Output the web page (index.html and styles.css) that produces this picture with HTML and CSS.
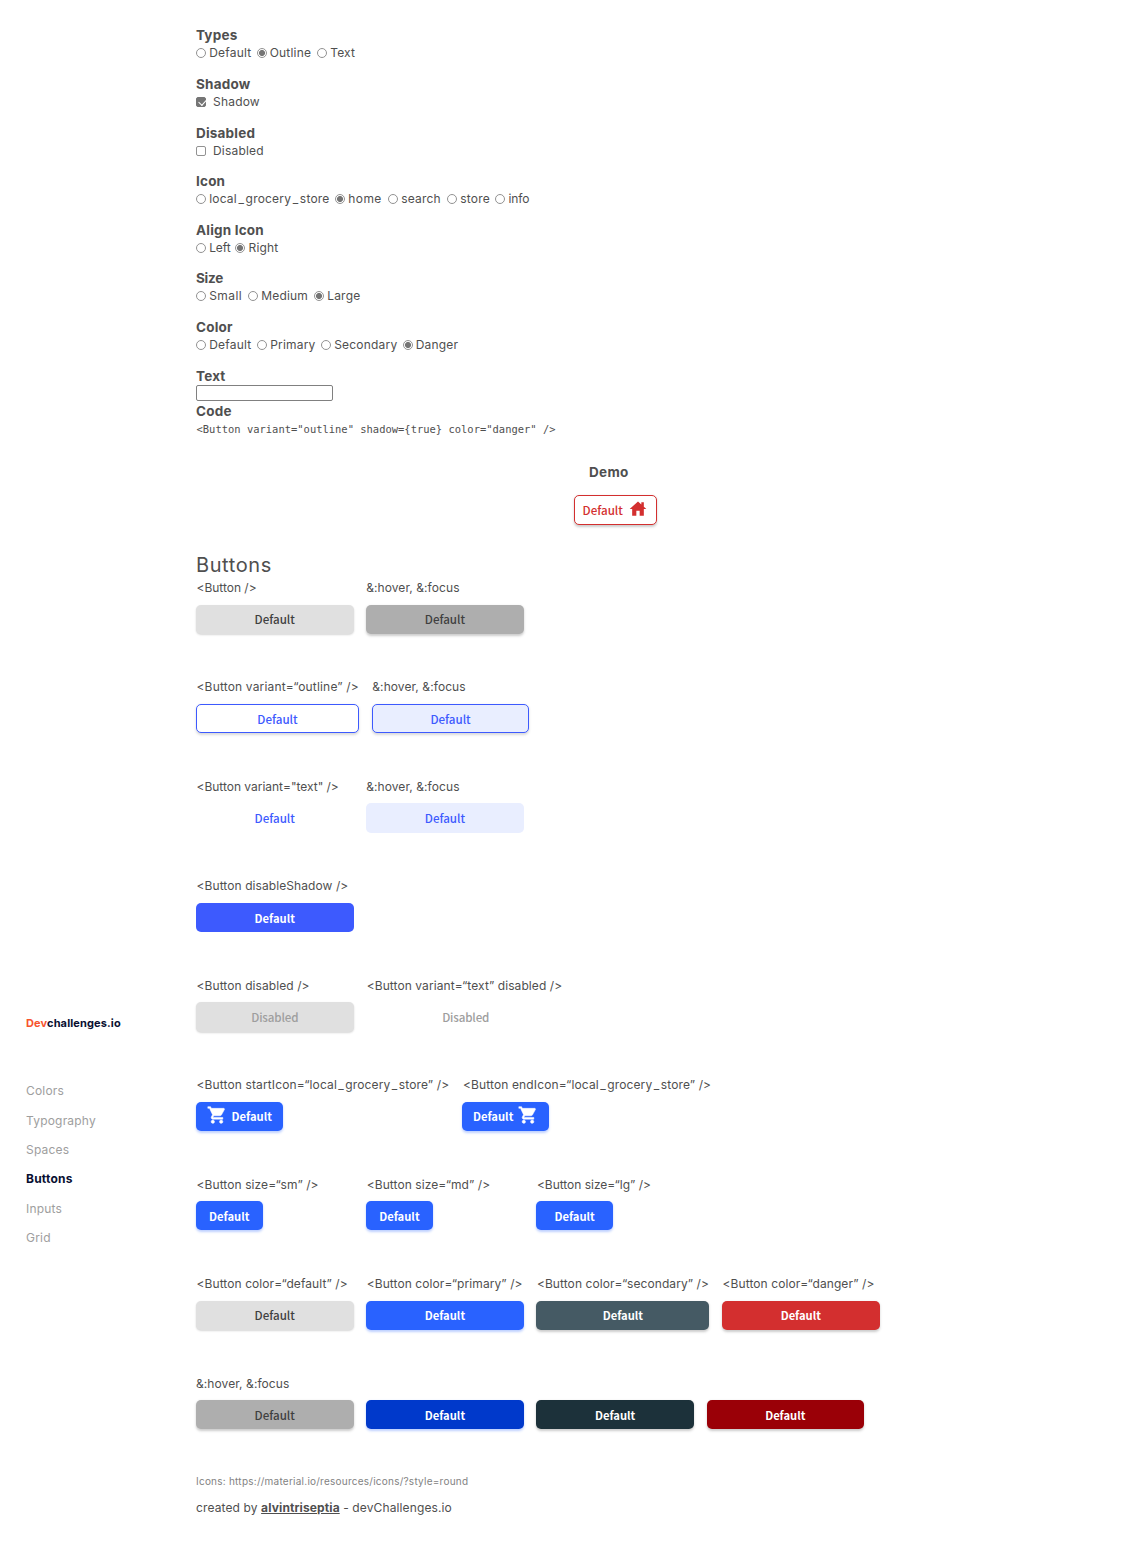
FILE: index.html
```html
<!DOCTYPE html>
<html lang="en">
<head>
<meta charset="utf-8">
<title>Button Component</title>
<link rel="stylesheet" href="styles.css">
</head>
<body>
<svg class="sprite" aria-hidden="true">
  <symbol id="cart" viewBox="0 0 24 24"><path d="M7 18c-1.1 0-1.99.9-1.99 2S5.9 22 7 22s2-.9 2-2-.9-2-2-2zM1 2v2h2l3.6 7.59-1.35 2.45c-.16.28-.25.61-.25.96 0 1.1.9 2 2 2h12v-2H7.42c-.14 0-.25-.11-.25-.25l.03-.12.9-1.63h7.45c.75 0 1.41-.41 1.75-1.03l3.58-6.49c.08-.14.12-.31.12-.48 0-.55-.45-1-1-1H5.21l-.94-2H1zm16 16c-1.1 0-1.99.9-1.99 2s.89 2 1.99 2 2-.9 2-2-.9-2-2-2z"/></symbol>
  <symbol id="home" viewBox="0 0 24 24"><path d="M19 9.3V4h-3v2.6L12 3 2 12h3v8h5v-6h4v6h5v-8h3l-3-2.7z"/></symbol>
</svg>
<div class="layout">
  <aside class="sidebar">
    <div class="logo"><span class="logo-accent">Dev</span>challenges.io</div>
    <nav class="menu">
      <a>Colors</a>
      <a>Typography</a>
      <a>Spaces</a>
      <a class="active">Buttons</a>
      <a>Inputs</a>
      <a>Grid</a>
    </nav>
  </aside>
  <main class="content">
    <section class="field">
      <h4>Types</h4>
      <div class="options cols-types">
        <label><input type="radio" name="type">Default</label>
        <label><input type="radio" name="type" checked>Outline</label>
        <label><input type="radio" name="type">Text</label>
      </div>
    </section>
    <section class="field">
      <h4>Shadow</h4>
      <div class="options"><label class="check"><input type="checkbox" checked>Shadow</label></div>
    </section>
    <section class="field">
      <h4>Disabled</h4>
      <div class="options"><label class="check"><input type="checkbox">Disabled</label></div>
    </section>
    <section class="field">
      <h4>Icon</h4>
      <div class="options cols-icon">
        <label><input type="radio" name="icon"><span>local<i>_</i>grocery<i>_</i>store</span></label>
        <label class="wide"><input type="radio" name="icon" checked>home</label>
        <label><input type="radio" name="icon">search</label>
        <label><input type="radio" name="icon">store</label>
        <label class="tight"><input type="radio" name="icon">info</label>
      </div>
    </section>
    <section class="field">
      <h4>Align Icon</h4>
      <div class="options cols-align">
        <label class="tight"><input type="radio" name="align">Left</label>
        <label><input type="radio" name="align" checked>Right</label>
      </div>
    </section>
    <section class="field">
      <h4 class="tight">Size</h4>
      <div class="options cols-size">
        <label class="wide"><input type="radio" name="size">Small</label>
        <label><input type="radio" name="size">Medium</label>
        <label><input type="radio" name="size" checked>Large</label>
      </div>
    </section>
    <section class="field">
      <h4>Color</h4>
      <div class="options cols-color">
        <label><input type="radio" name="color">Default</label>
        <label><input type="radio" name="color">Primary</label>
        <label><input type="radio" name="color">Secondary</label>
        <label><input type="radio" name="color" checked>Danger</label>
      </div>
    </section>
    <section class="text-field">
      <h4>Text</h4>
      <input type="text" class="text-input">
      <h4>Code</h4>
      <code>&lt;Button variant="outline" shadow={true} color="danger" /&gt;</code>
    </section>
    <section class="demo">
      <h4>Demo</h4>
      <button class="btn demo-btn">Default<svg><use href="#home"/></svg></button>
    </section>

    <h2>Buttons</h2>
    <div class="row">
      <div class="cell"><p class="snug">&lt;Button /&gt;</p><button class="btn gray">Default</button></div>
      <div class="cell"><p class="state">&amp;:hover, &amp;:focus</p><button class="btn gray-dark">Default</button></div>
    </div>
    <div class="row row-outline">
      <div class="cell"><p class="loose">&lt;Button variant=“outline” /&gt;</p><button class="btn outline">Default</button></div>
      <div class="cell"><p class="state">&amp;:hover, &amp;:focus</p><button class="btn outline tinted">Default</button></div>
    </div>
    <div class="row">
      <div class="cell"><p class="snug">&lt;Button variant="text" /&gt;</p><button class="btn text">Default</button></div>
      <div class="cell"><p class="state">&amp;:hover, &amp;:focus</p><button class="btn text tinted">Default</button></div>
    </div>
    <div class="row">
      <div class="cell"><p>&lt;Button disableShadow /&gt;</p><button class="btn indigo">Default</button></div>
    </div>
    <div class="row row-disabled">
      <div class="cell"><p>&lt;Button disabled /&gt;</p><button class="btn gray muted">Disabled</button></div>
      <div class="cell"><p>&lt;Button variant=“text” disabled /&gt;</p><button class="btn text muted">Disabled</button></div>
    </div>
    <div class="row row-icons">
      <div class="cell"><p class="icon-label">&lt;Button startIcon=“local<i>_</i>grocery<i>_</i>store” /&gt;</p><button class="btn blue with-icon"><svg><use href="#cart"/></svg>Default</button></div>
      <div class="cell"><p class="icon-label">&lt;Button endIcon=“local<i>_</i>grocery<i>_</i>store” /&gt;</p><button class="btn blue with-icon">Default<svg><use href="#cart"/></svg></button></div>
    </div>
    <div class="row">
      <div class="cell"><p>&lt;Button size=“sm” /&gt;</p><button class="btn blue sm">Default</button></div>
      <div class="cell"><p>&lt;Button size=“md” /&gt;</p><button class="btn blue sm">Default</button></div>
      <div class="cell"><p class="snug">&lt;Button size=“lg” /&gt;</p><button class="btn blue lg">Default</button></div>
    </div>
    <div class="row row-colors">
      <div class="cell"><p>&lt;Button color=“default” /&gt;</p><button class="btn gray">Default</button></div>
      <div class="cell"><p>&lt;Button color=“primary” /&gt;</p><button class="btn blue">Default</button></div>
      <div class="cell"><p>&lt;Button color=“secondary” /&gt;</p><button class="btn slate">Default</button></div>
      <div class="cell"><p>&lt;Button color=“danger” /&gt;</p><button class="btn red">Default</button></div>
    </div>
    <div class="row row-last">
      <div class="cell"><p class="state">&amp;:hover, &amp;:focus</p><button class="btn gray-dark">Default</button></div>
      <div class="cell"><p></p><button class="btn blue-dark">Default</button></div>
      <div class="cell"><p></p><button class="btn slate-dark">Default</button></div>
      <div class="cell"><p></p><button class="btn red-dark">Default</button></div>
    </div>
    <footer>
      <div class="source">Icons: https://material.io/resources/icons/?style=round</div>
      <div class="credit">created by <a>alvintriseptia</a> - devChallenges.io</div>
    </footer>
  </main>
</div>
</body>
</html>
```
FILE: styles.css
```css
* { box-sizing: border-box; margin: 0; padding: 0; }
body {
  background: #fff;
  color: #4f4f4f;
  font: 400 12px/18px Inter, "Open Sans", sans-serif;
  letter-spacing: .2px;
}
i { font-style: normal; margin: 0 1.5px; }
.sprite { display: none; }
.layout { display: flex; min-height: 1542px; }

.sidebar { width: 196px; flex: none; padding: 1014px 0 0 26px; }
.logo { font-size: 11px; font-weight: 700; letter-spacing: .12px; color: #090f31; }
.logo-accent { color: #f7542e; }
.menu { display: flex; flex-direction: column; gap: 11.4px; margin-top: 50.3px; color: #9e9e9e; }
.menu .active { font-weight: 700; color: #090f31; }

.content { flex: 1; padding-top: 26.4px; }
h4 { font-size: 13.5px; font-weight: 700; line-height: 18px; letter-spacing: .2px; }
h4.tight { letter-spacing: -.25px; }
.field { height: 48.6px; }
.options { display: grid; height: 18px; }
.cols-types { grid-template-columns: 60.5px 60.5px auto; }
.cols-icon { grid-template-columns: 139px 53px 59px 48.3px auto; }
.cols-align { grid-template-columns: 39.3px auto; }
.cols-size { grid-template-columns: 52px 66px auto; }
.cols-color { grid-template-columns: 61px 64px 81.5px auto; }
label { display: flex; align-items: center; gap: 3.2px; }
label.check { gap: 7px; }
label.wide { letter-spacing: .45px; }
label.tight { letter-spacing: -.1px; }
input[type="radio"], input[type="checkbox"] {
  appearance: none;
  flex: none;
  width: 10px;
  height: 10px;
  border: 1px solid #929292;
  background: #fff;
}
input[type="radio"] { border-radius: 50%; }
input[type="radio"]:checked { background: radial-gradient(circle, #757575 2.6px, #fff 3.5px); }
input[type="checkbox"] { border-radius: 2px; margin-top: 1px; }
input[type="checkbox"]:checked {
  border-color: #757575;
  background: #757575;
  position: relative;
}
input[type="checkbox"]:checked::after {
  content: "";
  position: absolute;
  left: 2.5px;
  top: 0;
  width: 3.5px;
  height: 6px;
  border: solid #fff;
  border-width: 0 1.4px 1.4px 0;
  transform: rotate(42deg);
}
.text-field { height: 71.6px; }
.text-input {
  display: block;
  width: 137px;
  height: 16px;
  margin: .6px 0 1px;
  border: 1px solid #808080;
  border-radius: 2px;
}
code { display: block; font: 10.45px/18px "DejaVu Sans Mono", monospace; letter-spacing: .015px; padding-left: .5px; }
.demo { margin-top: 25px; height: 89px; }
.demo h4 { margin-left: 393px; letter-spacing: .3px; }

.btn {
  display: flex;
  align-items: center;
  justify-content: center;
  width: 100%;
  height: 29.3px;
  border: 0;
  border-radius: 5px;
  font: 700 11.2px/18px "Noto Sans CJK JP", "Noto Sans", sans-serif;
  color: #fff;
  box-shadow: 0 1.5px 2.5px rgba(51, 51, 51, .25);
}
.btn svg { fill: currentColor; flex: none; width: 20px; height: 20px; }
.btn.blue svg { stroke: currentColor; stroke-width: .6px; position: relative; top: -1px; }
.btn.demo-btn {
  width: 82.5px;
  height: 30px;
  margin: 14px 0 0 378px;
  gap: 5px;
  border: 1px solid #d32f2f;
  background: #fff;
  color: #d32f2f;
}
.demo-btn svg { margin-top: -2px; }
.btn.gray, .btn.gray-dark, .btn.outline, .btn.text, .btn.demo-btn { font-weight: 500; font-size: 11.6px; }
h2 { font-size: 20px; font-weight: 400; line-height: 26.9px; letter-spacing: .6px; }
.row {
  display: grid;
  grid-template-columns: repeat(4, 157.5px);
  column-gap: 12.7px;
  height: 99.45px;
}
.row-outline { grid-template-columns: 163px 156.5px; column-gap: 13.3px; }
.row-disabled { grid-template-columns: 157.5px 199px; }
.row-icons { grid-template-columns: 253.75px 250px; }
.row-colors { grid-template-columns: 157.5px 157.5px 173px 157.5px; }
p { height: 18px; margin-bottom: 7.5px; padding-left: .5px; white-space: nowrap; letter-spacing: .08px; }
p.state { padding-left: 0; }
p.snug { letter-spacing: -.02px; }
p.loose { letter-spacing: .17px; }
p.icon-label { letter-spacing: .13px; }
p.icon-label i { margin: 0 1.4px; }
.with-icon { width: 86.5px; gap: 5px; }
.sm { width: 66.5px; }
.lg { width: 76.5px; }
.gray { background: #e0e0e0; color: #3f3f3f; box-shadow: 0 1px 2px rgba(51, 51, 51, .2); }
.gray-dark { background: #aeaeae; color: #3f3f3f; }
.outline { background: #fff; border: 1px solid #3d5afe; color: #3d5afe; box-shadow: 0 1.5px 2.5px rgba(51, 51, 51, .18); }
.text { background: #fff; color: #3d5afe; box-shadow: none; }
.tinted { background: #e9eeff; }
.indigo { background: #3d5afe; box-shadow: none; }
.blue { background: #2962ff; box-shadow: 0 1.5px 2.5px rgba(41, 98, 255, .3); }
.blue-dark { background: #0039cb; box-shadow: 0 1.5px 2.5px rgba(41, 98, 255, .3); }
.slate { background: #455a64; }
.slate-dark { background: #1c313a; }
.red { background: #d32f2f; }
.red-dark { background: #9a0007; }
.muted { color: #9e9e9e; letter-spacing: -.15px; }
.row-last { height: 97.2px; }
.source { font-size: 10px; color: #828282; letter-spacing: .24px; }
.credit { margin-top: 9.2px; letter-spacing: .12px; }
.credit a { font-weight: 700; text-decoration: underline; }
```
